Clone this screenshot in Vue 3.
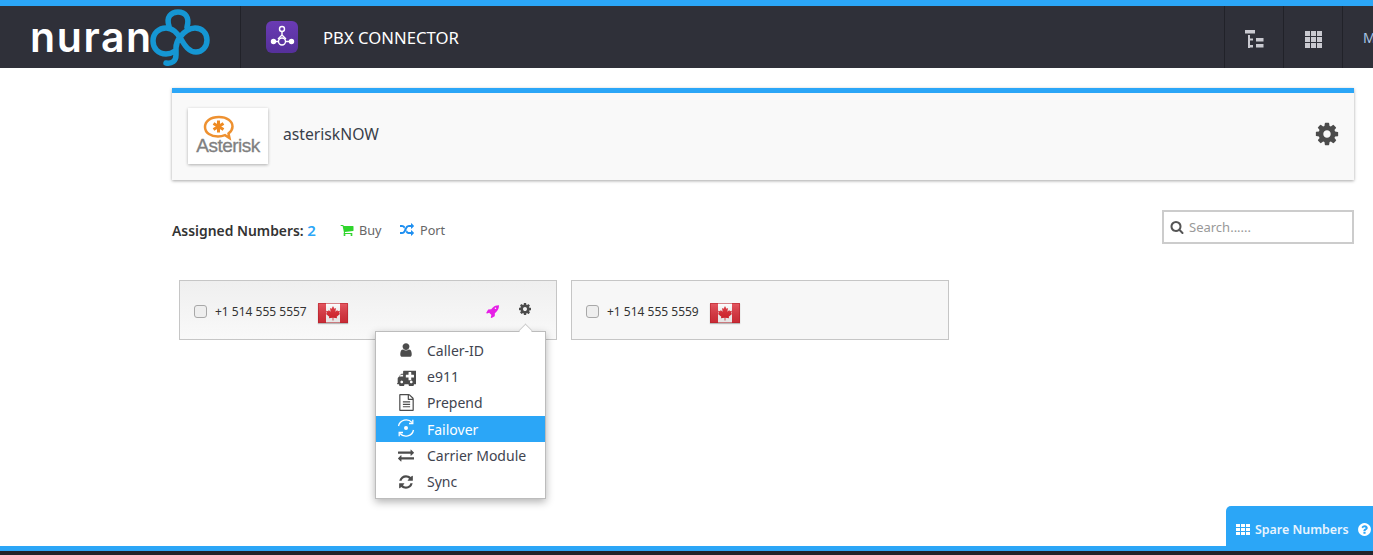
<script setup>
const icons = {
  cog: 'M1152 896q0-106-75-181t-181-75-181 75-75 181 75 181 181 75 181-75 75-181zm512-109v222q0 12-8 23t-20 13l-185 28q-19 54-39 91 35 50 107 138 10 12 10 25t-9 23q-27 37-99 108t-94 71q-12 0-26-9l-138-108q-44 23-91 38-16 136-29 186-7 28-36 28h-222q-14 0-24.5-8.5t-11.5-21.5l-28-184q-49-16-90-37l-141 107q-10 9-25 9-14 0-25-11-126-114-165-168-7-10-7-23 0-12 8-23 15-21 51-66.5t54-70.5q-27-50-41-99l-183-27q-13-2-21-12.5t-8-23.5v-222q0-12 8-23t19-13l186-28q14-46 39-92-40-57-107-138-10-12-10-24 0-10 9-23 26-36 98.5-107.5t94.5-71.5q13 0 26 10l138 107q44-23 91-38 16-136 29-186 7-28 36-28h222q14 0 24.5 8.5t11.5 21.5l28 184q49 16 90 37l142-107q9-9 24-9 13 0 25 10 129 119 165 170 7 8 7 22 0 12-8 23-15 21-51 66.5t-54 70.5q26 50 41 98l183 28q13 2 21 12.5t8 23.5z',
  search: 'M1216 832q0-185-131.5-316.5t-316.5-131.5-316.5 131.5-131.5 316.5 131.5 316.5 316.5 131.5 316.5-131.5 131.5-316.5zm512 832q0 52-38 90t-90 38q-54 0-90-38l-343-342q-179 124-399 124-143 0-273.5-55.5t-225-150-150-225-55.5-273.5 55.5-273.5 150-225 225-150 273.5-55.5 273.5 55.5 225 150 150 225 55.5 273.5q0 220-124 399l343 343q37 37 37 90z',
  user: 'M1536 1399q0 109-62.5 187t-150.5 78h-854q-88 0-150.5-78t-62.5-187q0-85 8.5-160.5t31.5-152 58.5-131 94-89 134.5-34.5q131 128 313 128t313-128q76 0 134.5 34.5t94 89 58.5 131 31.5 152 8.5 160.5zm-256-887q0 159-112.5 271.5t-271.5 112.5-271.5-112.5-112.5-271.5 112.5-271.5 271.5-112.5 271.5 112.5 112.5 271.5z',
  cart: 'M704 1536q0 52-38 90t-90 38-90-38-38-90 38-90 90-38 90 38 38 90zm896 0q0 52-38 90t-90 38-90-38-38-90 38-90 90-38 90 38 38 90zm128-1088v512q0 24-16.5 42.5t-40.5 21.5l-1044 122q13 60 13 70 0 16-24 64h920q26 0 45 19t19 45-19 45-45 19h-1024q-26 0-45-19t-19-45q0-11 8-31.5t16-36 21.5-40 15.5-29.5l-177-823h-204q-26 0-45-19t-19-45 19-45 45-19h256q16 0 28.5 6.5t19.5 15.5 13 24.5 8 26 5.5 29.5 4.5 26h1201q26 0 45 19t19 45z',
  random: 'M666 481q-60 92-137 273-22-45-37-72.5t-40.5-63.5-51-56.5-63-35-81.5-14.5h-224q-14 0-23-9t-9-23v-192q0-14 9-23t23-9h224q250 0 410 225zm1126 799q0 14-9 23l-320 320q-9 9-23 9-13 0-22.5-9.5t-9.5-22.5v-192q-32 0-85 .5t-81 1-73-1-71-5-64-10.5-63-18.5-58-28.5-59-40-55-53.5-56-69.5q59-93 136-273 22 45 37 72.5t40.5 63.5 51 56.5 63 35 81.5 14.5h256v-192q0-14 9-23t23-9q12 0 24 10l319 319q9 9 9 23zm0-896q0 14-9 23l-320 320q-9 9-23 9-13 0-22.5-9.5t-9.5-22.5v-192h-256q-48 0-87 15t-69 45-51 61.5-45 77.5q-32 62-78 171-29 66-49.5 111t-54 105-64 100-74 83-90 68.5-106.5 42-128 16.5h-224q-14 0-23-9t-9-23v-192q0-14 9-23t23-9h224q48 0 87-15t69-45 51-61.5 45-77.5q32-62 78-171 29-66 49.5-111t54-105 64-100 74-83 90-68.5 106.5-42 128-16.5h256v-192q0-14 9-23t23-9q12 0 24 10l319 319q9 9 9 23z',
  exchange: 'M1792 1184v192q0 13-9.5 22.5t-22.5 9.5h-1376v192q0 13-9.5 22.5t-22.5 9.5q-12 0-24-10l-319-320q-9-9-9-22 0-14 9-23l320-320q9-9 23-9 13 0 22.5 9.5t9.5 22.5v192h1376q13 0 22.5 9.5t9.5 22.5zm0-544q0 14-9 23l-320 320q-9 9-23 9-13 0-22.5-9.5t-9.5-22.5v-192h-1376q-13 0-22.5-9.5t-9.5-22.5v-192q0-13 9.5-22.5t22.5-9.5h1376v-192q0-14 9-23t23-9q12 0 24 10l319 319q9 9 9 23z',
  refresh: 'M1639 1056q0 5-1 7-64 268-268 434.5t-478 166.5q-146 0-282.5-55t-243.5-157l-129 129q-19 19-45 19t-45-19-19-45v-448q0-26 19-45t45-19h448q26 0 45 19t19 45-19 45l-137 137q71 66 161 102t187 36q134 0 250-65t186-179q11-17 53-117 8-23 30-23h192q13 0 22.5 9.5t9.5 22.5zm25-800v448q0 26-19 45t-45 19h-448q-26 0-45-19t-19-45 19-45l138-138q-148-137-349-137-134 0-250 65t-186 179q-11 17-53 117-8 23-30 23h-199q-13 0-22.5-9.5t-9.5-22.5v-7q65-268 270-434.5t480-166.5q146 0 284 55.5t245 156.5l130-129q19-19 45-19t45 19 19 45z',
  rocket: 'M1312 544q0-40-28-68t-68-28-68 28-28 68 28 68 68 28 68-28 28-68zm352-352q0 249-75.5 430.5t-253.5 360.5q-81 80-195 176l-20 379q-2 16-16 26l-384 224q-7 4-16 4-12 0-23-9l-64-64q-13-14-8-32l85-276-281-281-276 85q-3 1-9 1-14 0-23-9l-64-64q-17-19-5-39l224-384q10-14 26-16l379-20q96-114 176-195 188-187 358-258t431-71q14 0 24 9.5t10 22.5z',
  ambulance: 'M576 1408q0-53-37.5-90.5t-90.5-37.5-90.5 37.5-37.5 90.5 37.5 90.5 90.5 37.5 90.5-37.5 37.5-90.5zm-384-512h384v-256h-158q-14 2-22 9l-195 195q-7 12-9 22v30zm1280 512q0-53-37.5-90.5t-90.5-37.5-90.5 37.5-37.5 90.5 37.5 90.5 90.5 37.5 90.5-37.5 37.5-90.5zm128-448v-192q0-14-9-23t-23-9h-224v-224q0-14-9-23t-23-9h-192q-14 0-23 9t-9 23v224h-224q-14 0-23 9t-9 23v192q0 14 9 23t23 9h224v224q0 14 9 23t23 9h192q14 0 23-9t9-23v-224h224q14 0 23-9t9-23zm256-544v1152q0 26-19 45t-45 19h-192q0 106-75 181t-181 75-181-75-75-181h-384q0 106-75 181t-181 75-181-75-75-181h-128q-26 0-45-19t-19-45 19-45 45-19v-416q0-26 13-58t32-51l198-198q19-19 51-32t58-13h160v-320q0-26 19-45t45-19h1152q26 0 45 19t19 45z',
  file: 'M1596 380q28 28 48 76t20 88v1152q0 40-28 68t-68 28h-1344q-40 0-68-28t-28-68v-1600q0-40 28-68t68-28h896q40 0 88 20t76 48zm-444-244v376h376q-10-29-22-41l-313-313q-12-12-41-22zm384 1528v-1024h-416q-40 0-68-28t-28-68v-416h-768v1536h1280zm-1024-864q0-14 9-23t23-9h704q14 0 23 9t9 23v64q0 14-9 23t-23 9h-704q-14 0-23-9t-9-23v-64zm736 224q14 0 23 9t9 23v64q0 14-9 23t-23 9h-704q-14 0-23-9t-9-23v-64q0-14 9-23t23-9h704zm0 256q14 0 23 9t9 23v64q0 14-9 23t-23 9h-704q-14 0-23-9t-9-23v-64q0-14 9-23t23-9h704z',
  question: 'M1024 1376v-192q0-14-9-23t-23-9h-192q-14 0-23 9t-9 23v192q0 14 9 23t23 9h192q14 0 23-9t9-23zm256-672q0-88-55.5-163t-138.5-116-170-41q-243 0-371 213-15 24 8 42l132 100q7 6 19 6 16 0 25-12 53-68 86-92 34-24 86-24 48 0 85.5 26t37.5 59q0 38-20 61t-68 45q-63 28-115.5 86.5t-52.5 125.5v36q0 14 9 23t23 9h192q14 0 23-9t9-23q0-19 21.5-49.5t54.5-49.5q32-18 49-28.5t46-35 44.5-48 28-60.5 12.5-81zm384 192q0 209-103 385.5t-279.5 279.5-385.5 103-385.5-103-279.5-279.5-103-385.5 103-385.5 279.5-279.5 385.5-103 385.5 103 279.5 279.5 103 385.5z'
}
const numbers = [
  { id: 1, label: '+1 514 555 5557', active: true },
  { id: 2, label: '+1 514 555 5559', active: false }
]
const menu = [
  { label: 'Caller-ID', icon: 'user' },
  { label: 'e911', icon: 'ambulance' },
  { label: 'Prepend', icon: 'file' },
  { label: 'Failover', icon: 'failover', selected: true },
  { label: 'Carrier Module', icon: 'exchange' },
  { label: 'Sync', icon: 'refresh' }
]
const dots = Array.from({ length: 9 })
</script>

<template>
  <div class="page">
    <header class="topbar">
      <div class="brand">
        <span class="brand-text">nuran</span>
        <svg class="brand-mark" viewBox="0 0 70 63" fill="none" stroke="#1596d3" stroke-width="5.500" stroke-linecap="round">
          <path d="M30 46C27 48 24 49 21 49C13 49 8 43 8 36C8 28 14 23 21 23C28 23 32 28 36 34C40 41 44 47 51 47C57 47 62 42 62 35C62 28 57 23 50 23C44 23 39 27 35 32C32 36 31 39 31 43V50C31 56 27 59 21 58"/>
          <path d="M24 21C21 12 26 7 33 7C40 7 45 12 42 22"/>
        </svg>
      </div>
      <div class="product">
        <span class="product-icon">
          <svg viewBox="0 0 32 32" width="32" height="32" fill="none" stroke="#fff" stroke-width="1.400">
            <circle cx="16" cy="8" r="2.500"/>
            <circle cx="16" cy="20.500" r="3.500"/>
            <path d="M16 10.500V14M16 14L12 18M16 14L20 18"/>
            <path d="M8 20.500H12.500M19.500 20.500H25"/>
            <circle cx="7.500" cy="20.500" r="2" fill="#fff"/>
            <circle cx="25.500" cy="20.500" r="2" fill="#fff"/>
          </svg>
        </span>
        <span class="product-name">PBX CONNECTOR</span>
      </div>
      <div class="top-actions">
        <div class="top-cell">
          <svg class="tree" viewBox="0 0 19 18" width="19" height="18" fill="#c9c9d0">
            <rect x="0" y="0" width="10" height="3.500"/>
            <rect x="3" y="5" width="2" height="13"/>
            <rect x="3" y="8.500" width="5" height="2"/>
            <rect x="3" y="15" width="5" height="2.500"/>
            <rect x="11" y="8" width="7.500" height="3.500"/>
            <rect x="11" y="14" width="7.500" height="3.500"/>
          </svg>
        </div>
        <div class="top-cell">
          <span class="grid9"><i v-for="(d, i) in dots" :key="i"></i></span>
        </div>
        <div class="top-cell user-cell"><span>M</span></div>
      </div>
    </header>

    <main class="content">
      <section class="pbx-card">
        <div class="pbx-logo">
          <svg class="pbx-mark" viewBox="0 0 40 30" width="40" height="30">
            <path d="M21 3C12 3 7 7.500 7 13C7 19 13 22.500 20 22.500C23 22.500 25 22 27 21.200L31.500 24L30.500 19.500C33 17.500 34.500 15.500 34.500 12.500C34.500 7 29 3 21 3Z" fill="#fff" stroke="#ee9130" stroke-width="2.500"/>
            <path d="M20.500 6.500V18.500M15.500 9.500L25.500 15.500M25.500 9.500L15.500 15.500" fill="none" stroke="#ee8a22" stroke-width="3"/>
          </svg>
          <span class="pbx-logo-text">Asterisk</span>
        </div>
        <span class="pbx-name">asteriskNOW</span>
        <svg class="ic pbx-cog" viewBox="0 0 1792 1792"><path :d="icons.cog"/></svg>
      </section>

      <div class="toolbar">
        <strong class="assigned">Assigned Numbers: <b>2</b></strong>
        <a class="tool-link buy"><svg class="ic" viewBox="0 0 1792 1792"><path :d="icons.cart"/></svg>Buy</a>
        <a class="tool-link port"><svg class="ic" viewBox="0 0 1792 1792"><path :d="icons.random"/></svg>Port</a>
        <label class="search">
          <svg class="ic" viewBox="0 0 1792 1792"><path :d="icons.search"/></svg>
          <input type="text" placeholder="Search......" />
        </label>
      </div>

      <div class="numbers">
        <article v-for="n in numbers" :key="n.id" class="number-card" :class="{ active: n.active }">
          <span class="check"></span>
          <span class="phone">{{ n.label }}</span>
          <span class="flag">
            <svg viewBox="0 0 30 20" width="30" height="20">
              <defs>
                <linearGradient :id="'gloss' + n.id" x1="0" y1="0" x2="0" y2="1">
                  <stop offset="0" stop-color="#fff" stop-opacity=".2"/>
                  <stop offset="1" stop-color="#000" stop-opacity=".1"/>
                </linearGradient>
              </defs>
              <rect width="30" height="20" fill="#fff"/>
              <rect width="8" height="20" fill="#e0303c"/>
              <rect x="22" width="8" height="20" fill="#e0303c"/>
              <path d="M15 3L16.400 5.800L18 5L17.400 8.800L19.300 6.900L19.800 8.200L22 7.800L21.200 10.300L22.300 10.800L18.700 13.800L19.100 15.200L15.400 14.700V17.500H14.600V14.700L10.900 15.200L11.300 13.800L7.700 10.800L8.800 10.300L8 7.800L10.200 8.200L10.700 6.900L12.600 8.800L12 5L13.600 5.800Z" fill="#e0202a"/>
              <rect width="30" height="20" :fill="'url(#gloss' + n.id + ')'"/>
              <rect x=".5" y=".5" width="29" height="19" fill="none" stroke="#b3202a" stroke-opacity=".55"/>
            </svg>
          </span>
          <template v-if="n.active">
            <svg class="ic rocket" viewBox="0 0 1792 1792"><path :d="icons.rocket"/></svg>
            <svg class="ic card-cog" viewBox="0 0 1792 1792"><path :d="icons.cog"/></svg>
            <ul class="menu">
              <li v-for="m in menu" :key="m.label" :class="{ selected: m.selected }">
                <span class="menu-icon">
                  <svg v-if="m.icon === 'failover'" class="failover" viewBox="0 0 20 20" fill="none" stroke="currentColor" stroke-width="1.300">
                    <path d="M2.500 8A7.800 7.800 0 0 1 16 4.500"/>
                    <path d="M16.800 1.800V5.500H13"/>
                    <path d="M17.500 12A7.800 7.800 0 0 1 4 15.500"/>
                    <path d="M3.200 18.200V14.500H7"/>
                    <circle cx="10" cy="10" r="2" fill="currentColor" stroke="none"/>
                  </svg>
                  <svg v-else viewBox="0 0 1792 1792" class="ic" :class="'mi-' + m.icon"><path :d="icons[m.icon]"/></svg>
                </span>
                <span class="menu-label">{{ m.label }}</span>
              </li>
            </ul>
          </template>
        </article>
      </div>
    </main>

    <footer class="footer"></footer>

    <div class="spare">
      <span class="th"><i v-for="(d, i) in dots" :key="i"></i></span>
      <span class="spare-label">Spare Numbers</span>
      <svg class="ic" viewBox="0 0 1792 1792"><path :d="icons.question"/></svg>
    </div>
  </div>
</template>

<style>
html, body { margin: 0; overflow: hidden; background: #fff; }
</style>

<style scoped>
.page {
  position: relative;
  display: flex;
  flex-direction: column;
  height: 555px;
  overflow: hidden;
  font-family: "Noto Sans", "Open Sans", sans-serif;
  color: #333;
  background: #fff;
}
svg { display: block; }
.ic { fill: currentColor; }
.topbar {
  display: flex;
  align-items: stretch;
  flex: none;
  height: 62px;
  border-top: 6px solid #2ba6f7;
  background: #2f3039;
  color: #fff;
}
.brand {
  position: relative;
  width: 241px;
  flex: none;
  box-sizing: border-box;
  border-right: 1px solid #212229;
}
.brand-text {
  position: absolute;
  left: 30px;
  top: 4px;
  font-family: Inter, sans-serif;
  font-weight: 600;
  font-size: 41px;
  line-height: 54px;
  letter-spacing: 1.600px;
  color: #fff;
}
.brand-mark { position: absolute; left: 145px; top: -1px; width: 70px; height: 63px; }
.product { display: flex; align-items: center; flex: 1; padding-left: 25px; }
.product-icon {
  width: 32px;
  height: 32px;
  border-radius: 6px;
  background: linear-gradient(#6a3bb4, #55309a);
}
.product-name { margin-left: 25px; font-size: 16.700px; color: #fff; }
.top-actions { display: flex; flex: none; }
.top-cell {
  display: flex;
  align-items: center;
  justify-content: center;
  width: 59px;
  box-sizing: border-box;
  border-left: 1px solid #212229;
}
.tree { margin-top: 4px; }
.user-cell {
  width: 31px;
  overflow: hidden;
  justify-content: flex-start;
  padding-left: 20px;
  font-size: 14px;
  color: #a9c6e6;
}
.grid9 { display: grid; grid-template-columns: repeat(3, 5px); grid-auto-rows: 5px; gap: 1px; margin-top: 4px; }
.grid9 i { background: #c9c9d0; }
.content { flex: 1; padding: 20px 19px 0 172px; min-height: 0; }
.pbx-card {
  display: flex;
  align-items: center;
  box-sizing: border-box;
  height: 92px;
  padding: 0 14px 0 16px;
  border-top: 5px solid #2ba6f7;
  background: #f9f9f9;
  box-shadow: 0 1px 3px rgba(0, 0, 0, .35);
}
.pbx-logo {
  display: flex;
  flex-direction: column;
  align-items: center;
  width: 80px;
  height: 56px;
  margin-bottom: 2px;
  padding-top: 6px;
  box-sizing: border-box;
  background: #fff;
  box-shadow: 0 1px 3px rgba(0, 0, 0, .3);
}
.pbx-mark { margin-right: 20px; }
.pbx-logo-text {
  margin-top: -8px;
  font-family: "Liberation Sans", sans-serif;
  font-size: 19px;
  line-height: 20px;
  letter-spacing: -.5px;
  color: #808080;
  -webkit-text-stroke: .3px #808080;
}
.pbx-name { margin-left: 15px; margin-bottom: 6px; font-size: 15.700px; color: #3a3f4a; }
.pbx-cog { margin-left: auto; margin-bottom: 5px; width: 26px; height: 26px; color: #4c4c4c; }
.toolbar {
  display: flex;
  align-items: center;
  height: 34px;
  margin-top: 30px;
}
.assigned { margin-top: 6px; font-size: 13.900px; font-weight: 600; color: #333; }
.assigned b { font-size: 15px; font-weight: 600; color: #2ba6f7; }
.tool-link {
  display: flex;
  align-items: center;
  margin-top: 6px;
  font-size: 12.700px;
  color: #666;
}
.tool-link svg { width: 14px; height: 14px; }
.buy { gap: 5px; margin-left: 24px; }
.buy svg { color: #2fd52c; }
.port { gap: 6px; margin-left: 18.500px; }
.port svg { color: #1f8ff0; }
.search {
  display: flex;
  align-items: center;
  gap: 5px;
  box-sizing: border-box;
  width: 192px;
  height: 34px;
  margin-left: auto;
  padding-left: 6px;
  border: 2px solid #ccc;
  color: #555;
}
.search svg { width: 14px; height: 14px; }
.search input {
  flex: 1;
  min-width: 0;
  border: 0;
  outline: 0;
  padding: 0;
  background: transparent;
  font: 13px "Noto Sans", sans-serif;
}
.search input::placeholder { color: #999; opacity: 1; }
.numbers { display: flex; gap: 14px; margin: 36px 0 0 7px; }
.number-card {
  position: relative;
  display: flex;
  align-items: center;
  box-sizing: border-box;
  width: 378px;
  height: 60px;
  padding: 0 14px;
  border: 1px solid #c6c6c6;
  background: #f7f7f7;
}
.number-card.active { background: linear-gradient(#efefef, #f9f9f9); }
.check {
  width: 11px;
  height: 11px;
  margin-top: 2px;
  border: 1px solid #a8a8a8;
  border-radius: 3px;
  background: #eee;
}
.phone { margin-left: 8px; margin-top: 2px; font-size: 12px; color: #333; }
.flag { margin-left: 11px; margin-top: 6px; box-shadow: 0 1px 1px rgba(0, 0, 0, .25); }
.rocket { margin-left: auto; margin-top: 2px; width: 14px; height: 14px; color: #e61fe6; }
.card-cog { margin-left: 18px; margin-right: 10px; margin-top: -3px; width: 14px; height: 14px; color: #4c4c4c; }
.menu {
  position: absolute;
  left: 195px;
  top: 50px;
  box-sizing: border-box;
  width: 171px;
  height: 168px;
  margin: 0;
  padding: 5px 0;
  list-style: none;
  background: #fff;
  border: 1px solid #bcbcbc;
  box-shadow: 0 3px 8px rgba(0, 0, 0, .3);
}
.menu::before {
  content: "";
  position: absolute;
  top: -7px;
  right: 14px;
  width: 10px;
  height: 10px;
  background: #fff;
  border-top: 1px solid #ccc;
  border-left: 1px solid #ccc;
  transform: rotate(45deg) scale(.9);
}
.menu li {
  display: flex;
  align-items: center;
  height: 26.300px;
  padding-left: 22px;
  font-size: 14px;
  color: #3f4450;
}
.menu li.selected { background: #2ba6f7; color: #fff; }
.menu-icon { display: flex; justify-content: center; width: 16px; color: #4c4c4c; }
.selected .menu-icon { color: #fff; }
.menu-icon svg { width: 16px; height: 16px; flex: none; }
.menu-icon .mi-ambulance { width: 19px; height: 19px; }
.menu-icon .mi-file { width: 17px; height: 17px; }
.menu-icon .failover { width: 20px; height: 20px; margin-top: -3px; }
.menu-label { margin-left: 13px; position: relative; z-index: 1; }
.footer {
  flex: none;
  height: 4px;
  border-top: 5px solid #2ba6f7;
  background: #23242a;
}
.spare {
  position: absolute;
  right: 0;
  bottom: 9px;
  display: flex;
  align-items: center;
  box-sizing: border-box;
  width: 147px;
  height: 40px;
  padding: 6px 0 0 10px;
  border-radius: 5px 0 0 0;
  background: #2ba6f7;
  color: #fff;
  white-space: nowrap;
}
.th { display: grid; grid-template-columns: repeat(3, 4px); grid-auto-rows: 3px; gap: 1px; flex: none; }
.th i { background: #fff; }
.spare-label { margin-left: 5px; font-size: 12.400px; font-weight: 600; color: #e8f4fe; }
.spare svg { width: 15px; height: 15px; margin-left: 8px; flex: none; }
</style>
